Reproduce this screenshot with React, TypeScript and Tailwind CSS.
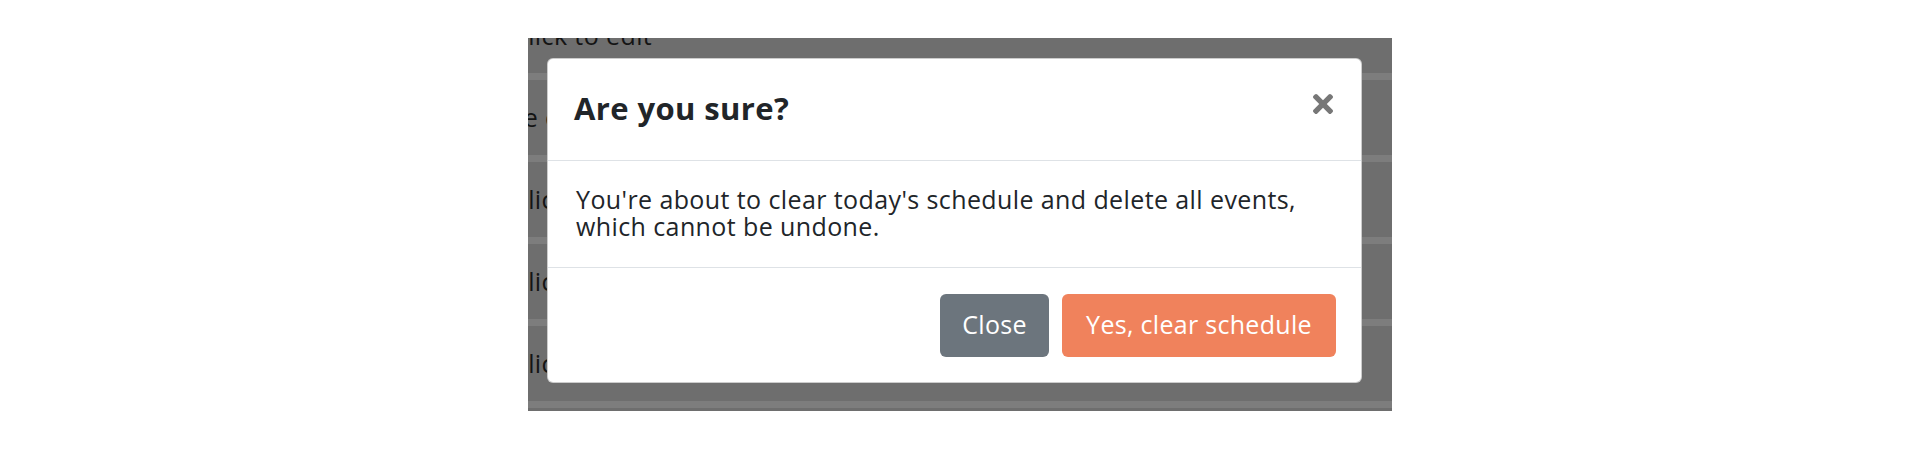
const rows = [
  { label: 'Click to edit', shift: '-ml-[16px]' },
  { label: 'Coffee chat', shift: '-ml-[68px]' },
  { label: 'Click to edit', shift: '-ml-[16px]' },
  { label: 'Click to edit', shift: '-ml-[16px]' },
  { label: 'Click to edit', shift: '-ml-[16px]' },
  { label: 'Click to edit', shift: '-ml-[16px]' },
]

function CloseIcon() {
  // bold "times" glyph used by the modal's dismiss button
  return (
    <svg viewBox="0 80 352 352" className="w-[20px] h-[20px]" fill="currentColor" aria-hidden="true">
      <path d="M242.72 256l100.07-100.07c12.28-12.28 12.28-32.19 0-44.48l-22.24-22.24c-12.28-12.28-32.19-12.28-44.48 0L176 189.28 75.93 89.21c-12.28-12.28-32.19-12.28-44.48 0L9.21 111.45c-12.28 12.28-12.28 32.19 0 44.48L109.28 256 9.21 356.07c-12.28 12.28-12.28 32.19 0 44.48l22.24 22.24c12.28 12.28 32.2 12.28 44.48 0L176 322.72l100.07 100.07c12.28 12.28 32.2 12.28 44.48 0l22.24-22.24c12.28-12.28 12.28-32.19 0-44.48L242.72 256z" />
    </svg>
  )
}

export default function App() {
  return (
    <div
      className="w-[1920px] h-[450px] bg-white pt-[38px] pl-[528px]"
      style={{ fontFamily: '"Open Sans", "Noto Sans", sans-serif' }}
    >
      <div className="relative w-[864px] h-[373px] overflow-hidden bg-[#6e6e6e]">
        {/* schedule rows behind the backdrop */}
        <div className="-mt-[40px]">
          {rows.map((row, i) => (
            <div key={i}>
              <div className="h-[75px] flex items-center">
                <span className={`${row.shift} text-[25px] leading-[27px] tracking-[0.4px] text-[#141414] whitespace-nowrap`}>
                  {row.label}
                </span>
              </div>
              <div className="h-[7px] bg-[#7d7d7d]" />
            </div>
          ))}
        </div>

        {/* modal */}
        <div className="absolute left-[19px] top-[20px] w-[815px] h-[325px] bg-white rounded-[6px] border border-black/20 flex flex-col">
          <div className="h-[102px] border-b border-[#dee2e6] flex justify-between pl-[26px] pr-[28px]">
            <h5 className="mt-[31px] text-[31px] leading-[36px] font-bold tracking-[0.4px] text-[#212529]">Are you sure?</h5>
            <button type="button" className="mt-[35px] self-start text-[#777777]" aria-label="Close">
              <CloseIcon />
            </button>
          </div>
          <div className="h-[107px] border-b border-[#dee2e6] px-[28px] pt-[25px]">
            <p className="text-[25px] leading-[27px] tracking-[0.4px] text-[#212529]">
              You're about to clear today's schedule and delete all events,
              <br />
              which cannot be undone.
            </p>
          </div>
          <div className="flex-1 flex items-center justify-end gap-[13px] pr-[25px]">
            <button
              type="button"
              className="w-[109px] h-[63px] rounded-[6px] bg-[#6c757d] text-white text-[25px] tracking-[0.3px]"
            >
              Close
            </button>
            <button
              type="button"
              className="w-[274px] h-[63px] rounded-[6px] bg-[#f0825c] text-white text-[25px] tracking-[0.3px]"
            >
              Yes, clear schedule
            </button>
          </div>
        </div>
      </div>
    </div>
  )
}
